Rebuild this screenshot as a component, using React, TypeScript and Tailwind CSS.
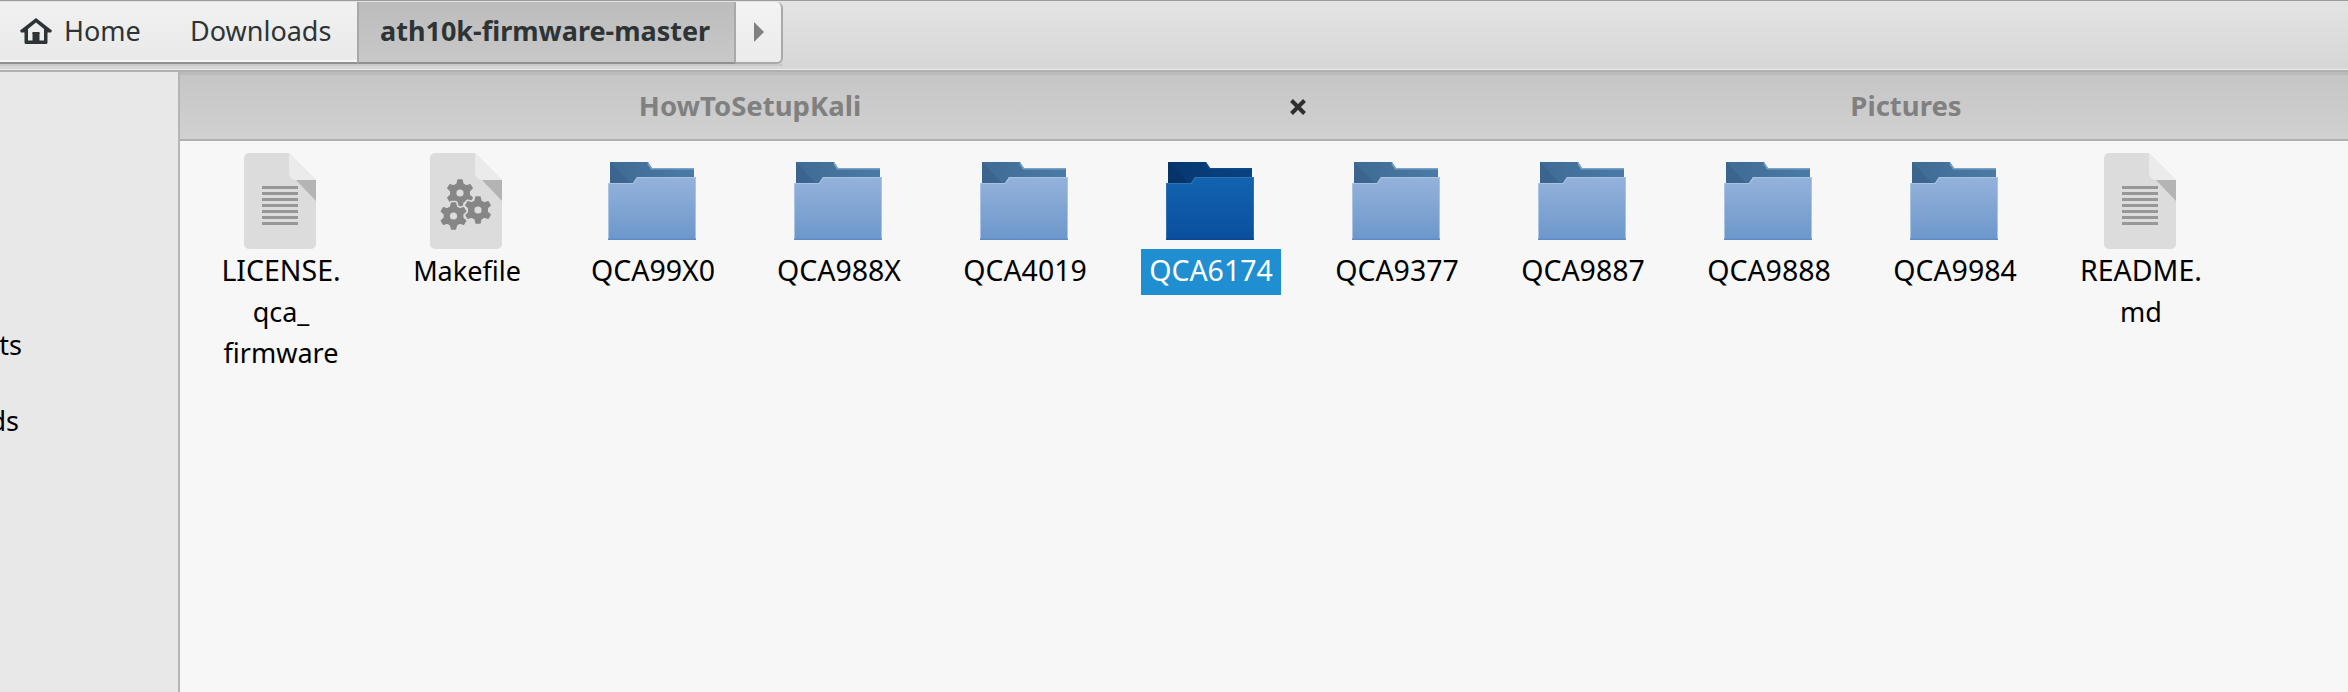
import React from "react";

const FONT = "font-['Noto_Sans',sans-serif]";

function gearPath(cx: number, cy: number, r: number): string {
  const teeth = 6;
  const inner = r * 0.72;
  const pts: string[] = [];
  for (let i = 0; i < teeth; i++) {
    const a = (i / teeth) * Math.PI * 2 - Math.PI / 2;
    const step = Math.PI / teeth;
    const list: [number, number][] = [
      [inner, a - step * 0.62],
      [r, a - step * 0.3],
      [r, a + step * 0.3],
      [inner, a + step * 0.62],
    ];
    for (const [rad, ang] of list) {
      pts.push(`${(cx + rad * Math.cos(ang)).toFixed(2)} ${(cy + rad * Math.sin(ang)).toFixed(2)}`);
    }
  }
  return `M${pts.join("L")}Z`;
}

function FileBase({ children }: { children?: React.ReactNode }) {
  return (
    <svg width="72" height="96" viewBox="0 0 72 96" className="block">
      <path d="M5 0H45L72 27V91a5 5 0 0 1-5 5H5a5 5 0 0 1-5-5V5a5 5 0 0 1 5-5Z" fill="#dcdcdc" />
      <path d="M45 0L72 27H52a7 7 0 0 1-7-7Z" fill="#ebebeb" />
      <path d="M52 27H72V48Z" fill="#b4b4b4" />
      {children}
    </svg>
  );
}

function TextFile() {
  return (
    <FileBase>
      {[33, 39, 45, 51, 57, 63, 69].map((y) => (
        <rect key={y} x="18" y={y} width="36" height="3" fill="#979797" />
      ))}
    </FileBase>
  );
}

function MakeFile() {
  const gears: [number, number][] = [
    [30, 40],
    [48, 57],
    [23.5, 63],
  ];
  return (
    <FileBase>
      {gears.map(([x, y]) => (
        <g key={`${x}-${y}`}>
          <path d={gearPath(x, y, 13.2)} fill="#868686" stroke="#dcdcdc" strokeWidth="4.5" strokeLinejoin="round" />
          <path d={gearPath(x, y, 13.2)} fill="#868686" stroke="#868686" strokeWidth="1.2" strokeLinejoin="round" />
          <circle cx={x} cy={y} r="3.6" fill="#dcdcdc" />
        </g>
      ))}
    </FileBase>
  );
}

function Folder({ selected, id }: { selected?: boolean; id: string }) {
  const front = selected ? ["#1263b0", "#0b4f9e"] : ["#94b3db", "#6c97cb"];
  const back = selected ? ["#07366f", "#084382"] : ["#3f6b94", "#4a7ba6"];
  const edge = selected ? "#2f72b4" : "#a9c3e3";
  const base = selected ? "#0a478f" : "#5f8cc4";
  const topLine = selected ? "#0d4a8c" : "#7ba3c8";
  return (
    <svg width="88" height="78" viewBox="0 0 88 78" className="block">
      <defs>
        <linearGradient id={`f-${id}`} x1="0" y1="0" x2="0" y2="1">
          <stop offset="0" stopColor={front[0]} />
          <stop offset="1" stopColor={front[1]} />
        </linearGradient>
        <linearGradient id={`b-${id}`} x1="0" y1="0" x2="1" y2="0">
          <stop offset="0" stopColor={back[0]} />
          <stop offset="1" stopColor={back[1]} />
        </linearGradient>
      </defs>
      <path d="M2 0H40L44 6H86V22H2Z" fill={`url(#b-${id})`} />
      <path d="M40 0L44 6H86V7.5H43L39.5 2Z" fill={topLine} />
      <path d="M2 0L22 21H2Z" fill={selected ? "#063062" : "#38618a"} opacity="0.6" />
      <path d="M0 21H25L29 15H88V78H0Z" fill={`url(#f-${id})`} />
      <path d="M0 21H25L29 15H88V16H29.6L25.6 22H1V78H0Z" fill={edge} />
      <rect x="87" y="15" width="1" height="63" fill={edge} />
      <rect x="0" y="76.5" width="88" height="1.5" fill={base} />
    </svg>
  );
}

function HomeIcon() {
  return (
    <svg width="32" height="26" viewBox="0 0 32 26" className="block shrink-0">
      <path
        d="M16 0L32 12.5L31 14.5H27.5V24.5a1.5 1.5 0 0 1-1.5 1.5H6a1.5 1.5 0 0 1-1.5-1.5V14.5H1L0 12.5ZM16 4.5L8 11V22.5H12.5V15H19.5V22.5H24V11Z"
        fill="#2e3436"
        fillRule="evenodd"
      />
      <rect x="12.5" y="14" width="7" height="2" fill="#2e3436" />
    </svg>
  );
}

const items: { lines: string[]; kind: "text" | "make" | "folder"; selected?: boolean }[] = [
  { lines: ["LICENSE.", "qca_", "firmware"], kind: "text" },
  { lines: ["Makefile"], kind: "make" },
  { lines: ["QCA99X0"], kind: "folder" },
  { lines: ["QCA988X"], kind: "folder" },
  { lines: ["QCA4019"], kind: "folder" },
  { lines: ["QCA6174"], kind: "folder", selected: true },
  { lines: ["QCA9377"], kind: "folder" },
  { lines: ["QCA9887"], kind: "folder" },
  { lines: ["QCA9888"], kind: "folder" },
  { lines: ["QCA9984"], kind: "folder" },
  { lines: ["README.", "md"], kind: "text" },
];

export default function App() {
  return (
    <div className={`${FONT} flex h-[692px] w-[2348px] flex-col overflow-hidden bg-[#f7f7f7] text-[27px] text-black`}>
      <header className="h-[72px] shrink-0 border-t-[1px] border-b-[2px] border-t-[#9c9c9c] border-b-[#b0b0b0] bg-gradient-to-b from-[#e4e4e4] to-[#d6d6d6] pt-[1px] shadow-[inset_0_-1px_0_#ececec]">
        <nav className="flex h-[62px] w-[783px] text-[#2e3436] shadow-[0_2px_0_#c9c9c9]">
          <a className="flex h-full w-[170px] items-center gap-[12px] border-b-[2px] border-b-[#909090] bg-gradient-to-b from-[#f1f1f1] to-[#e9e9e9] pb-[2px] pl-[20px] shadow-[inset_0_-2px_0_#f6f6f6]">
            <HomeIcon />
            <span>Home</span>
          </a>
          <a className="flex h-full w-[187px] items-center border-b-[2px] border-b-[#909090] bg-gradient-to-b from-[#f1f1f1] to-[#e9e9e9] pb-[2px] pl-[20px] shadow-[inset_0_-2px_0_#f6f6f6]">
            Downloads
          </a>
          <a className="flex h-full w-[379px] items-center border-x-[2px] border-b-[2px] border-x-[#a9a9a9] border-b-[#909090] bg-gradient-to-b from-[#bcbcbc] to-[#c8c8c8] pb-[2px] pl-[21px] font-bold">
            ath10k-firmware-master
          </a>
          <button className="flex h-full w-[47px] items-center rounded-r-[6px] border-r-[2px] border-b-[2px] border-r-[#a9a9a9] border-b-[#a9a9a9] bg-gradient-to-b from-[#f3f3f3] to-[#ebebeb] pl-[18px]">
            <svg width="10" height="20" viewBox="0 0 10 20" className="block">
              <path d="M0 0L10 10L0 20Z" fill="#808080" />
            </svg>
          </button>
        </nav>
      </header>
      <div className="flex min-h-0 flex-1">
        <aside className="relative w-[180px] shrink-0 overflow-hidden border-r-[2px] border-r-[#b5b5b5] bg-[#e8e8e8] pt-[254px]">
          <div className="flex h-[38px] w-[22px] items-center justify-end whitespace-nowrap leading-[38px]">Documents</div>
          <div className="mt-[38px] flex h-[38px] w-[19px] items-center justify-end whitespace-nowrap leading-[38px]">Downloads</div>
        </aside>
        <main className="min-w-0 flex-1">
          <div className="flex h-[69px] border-b-[2px] border-b-[#b0b0b0] bg-gradient-to-b from-[#c5c5c5] to-[#d1d1d1] font-bold text-[#808080] shadow-[inset_0_3px_0_#bababa]">
            <div className="relative flex w-[1140px] shrink-0 items-center justify-center pt-[1px] text-[27.5px]">
              <span>HowToSetupKali</span>
              <button className="absolute right-[13px] top-[27px]">
                <svg width="18" height="16" viewBox="0 0 18 16" className="block">
                  <path d="M2.5 1.5L15.5 14.5M15.5 1.5L2.5 14.5" stroke="#2e2e2e" strokeWidth="4" />
                </svg>
              </button>
            </div>
            <div className="flex w-[1172px] shrink-0 items-center justify-center pt-[1px] text-[27.5px]">Pictures</div>
          </div>
          <div className="flex items-start pl-[7px] pt-[12px]">
            {items.map((item, i) => (
              <div key={i} className="flex w-[186px] shrink-0 flex-col items-center">
                <div className="flex h-[96px] items-center justify-center">
                  {item.kind === "text" && <TextFile />}
                  {item.kind === "make" && <MakeFile />}
                  {item.kind === "folder" && <Folder id={String(i)} selected={item.selected} />}
                </div>
                <div
                  className={`ml-[2px] px-[8px] pt-[1px] pb-[4px] text-center leading-[41px] ${
                    item.selected ? "bg-[#1f8fd2] text-white" : ""
                  }`}
                >
                  {item.lines.map((l) => (
                    <div key={l} className={l === l.toUpperCase() ? "text-[28.5px]" : ""}>
                      {l}
                    </div>
                  ))}
                </div>
              </div>
            ))}
          </div>
        </main>
      </div>
    </div>
  );
}
